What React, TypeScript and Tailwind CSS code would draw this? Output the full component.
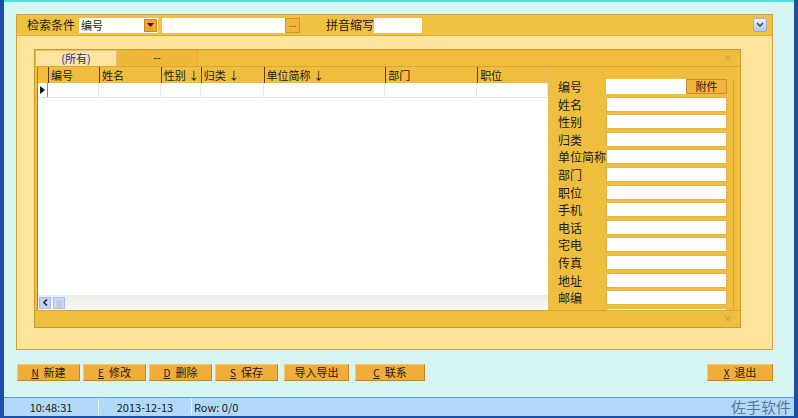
import React from "react";

const columns = [
  { title: "编号", w: "w-[51px]" },
  { title: "姓名", w: "w-[62px]" },
  { title: "性别 ↓", w: "w-[40px]" },
  { title: "归类 ↓", w: "w-[63px]" },
  { title: "单位简称 ↓", w: "w-[122px]" },
  { title: "部门", w: "w-[92px]" },
  { title: "职位", w: "w-[71px]" },
];

const fields = ["姓名", "性别", "归类", "单位简称", "部门", "职位", "手机", "电话", "宅电", "传真", "地址", "邮编", ""];

const buttons = [
  { key: "N", label: "新建", w: "w-[63px]" },
  { key: "E", label: "修改", w: "w-[63px]" },
  { key: "D", label: "删除", w: "w-[63px]" },
  { key: "S", label: "保存", w: "w-[63px]" },
  { key: "", label: "导入导出", w: "w-[65px]" },
  { key: "C", label: "联系", w: "w-[70px]" },
];

const font = { fontFamily: '"Noto Sans CJK SC", "Liberation Sans", sans-serif' };

const Btn = ({ k, label, w }: { k: string; label: string; w: string }) => (
  <div className={`${w} h-[17px] bg-[#f2ac3a] border border-[#c8861c] border-t-[#f8c870] border-l-[#f8c870] flex items-center justify-center text-[11px] text-[#202020]`}>
    {k && <span className="underline mr-[5px] text-[10px]">{k}</span>}
    {label}
  </div>
);

const App = () => {
  return (
    <div className="w-[798px] h-[418px] flex flex-col bg-[#1c4fa8] px-[4px] overflow-hidden text-[12px] text-[#1a1a1a]" style={font}>
      <div className="flex-1 bg-[#d6f5f3] border-t-[2px] border-[#4fe0e0] pt-[12px] pl-[12px] flex flex-col">
        {/* main panel */}
        <div className="w-[757px] h-[336px] border border-[#d2a232] bg-[#fbe49c] flex flex-col">
          <div className="h-[21px] bg-[#f1c142] border-b border-[#e0ae34] flex items-center pl-[10px] pr-[5px]">
            <span className="w-[52px]">检索条件</span>
            <div className="w-[79px] h-[15px] bg-white flex items-center">
              <span className="flex-1 pl-[2px] text-[11px]">编号</span>
              <div className="w-[13px] h-[13px] mr-[1px] bg-[#f0a830] border border-[#c88a20] flex items-center justify-center">
                <svg width="7" height="4" viewBox="0 0 7 4"><path d="M0 0h7L3.5 4z" fill="#202020" /></svg>
              </div>
            </div>
            <div className="w-[123px] h-[15px] bg-white ml-[4px]" />
            <div className="w-[15px] h-[15px] bg-[#f2b440] border border-[#d0962a] text-[9px] leading-[10px] text-center text-[#705010]">...</div>
            <span className="ml-[26px] w-[48px]">拼音缩写</span>
            <div className="w-[48px] h-[15px] bg-white" />
            <div className="flex-1" />
            <div className="w-[14px] h-[14px] rounded-[2px] bg-gradient-to-b from-[#e8eefc] to-[#b4c6ec] border border-[#9aaed8] flex items-center justify-center">
              <svg width="8" height="6" viewBox="0 0 8 6"><path d="M1 1l3 3 3-3" fill="none" stroke="#3a4e8a" strokeWidth="1.6" /></svg>
            </div>
          </div>
          <div className="pl-[17px] pt-[13px]">
            {/* inner panel */}
            <div className="w-[707px] h-[279px] border border-[#cc9a2e] bg-[#f0be3e] flex flex-col">
              <div className="h-[17px] flex items-end border-b border-[#d9a534]">
                <div className="ml-[1px] w-[81px] h-[16px] bg-[#fbe3a0] border-t border-r border-[#e6c070] text-center text-[11px] text-[#1c2ea0] leading-[15px]">(所有)</div>
                <div className="w-[81px] h-[16px] bg-[#f0b838] border-r border-[#e2aa36] text-center text-[11px] leading-[14px]">--</div>
                <div className="flex-1" />
                <span className="mr-[8px] mb-[3px] text-[9px] text-[#b89060] leading-[10px]">×</span>
              </div>
              <div className="flex-1 flex pl-[2px] overflow-hidden">
                {/* grid */}
                <div className="w-[511px] bg-white flex flex-col border-l border-[#b08024]">
                  <div className="h-[16px] bg-[#f0be3e] flex">
                    <div className="w-[10px]" />
                    {columns.map((c) => (
                      <div key={c.title} className={`${c.w} border-l border-[#5a4010] pl-[2px] text-[11px] leading-[16px] whitespace-nowrap overflow-hidden`}>
                        {c.title}
                      </div>
                    ))}
                  </div>
                  <div className="h-[15px] flex border-b border-[#e4e4e4]">
                    <div className="w-[10px] flex items-center pl-[2px] border-r border-[#888]">
                      <svg width="5" height="8" viewBox="0 0 5 8"><path d="M0 0l5 4-5 4z" fill="#101010" /></svg>
                    </div>
                    {columns.map((c) => (
                      <div key={c.title} className={`${c.w} border-r border-[#e6e6e6]`} />
                    ))}
                  </div>
                  <div className="flex-1" />
                  <div className="h-[15px] bg-gradient-to-b from-[#ecece8] to-[#f8f8f4] flex items-center pl-[1px] gap-[2px]">
                    <div className="w-[12px] h-[12px] bg-[#c4d4f4] border border-[#a8bce4] flex items-center justify-center">
                      <svg width="5" height="7" viewBox="0 0 5 7"><path d="M4 0.5L1 3.5l3 3" fill="none" stroke="#1e2c60" strokeWidth="1.6" /></svg>
                    </div>
                    <div className="w-[12px] h-[12px] bg-[#ccdaf4] border border-[#aabee6] text-[7px] leading-[10px] text-center text-[#8ea4d0]">|||</div>
                  </div>
                </div>
                {/* form */}
                <div className="flex-1 border-l border-[#e8c060] pl-[9px] pr-[6px] pt-[12px] overflow-hidden">
                  <div className="border-r border-[#d8a430] pr-[6px] h-full">
                    <div className="h-[17.6px] flex items-start">
                      <span className="w-[48px] leading-[16px]">编号</span>
                      <div className="w-[80px] h-[15px] bg-white" />
                      <div className="w-[41px] h-[15px] bg-[#f2b43e] border border-[#c8902a] text-[11px] leading-[13px] text-center">附件</div>
                    </div>
                    {fields.map((f, i) => (
                      <div key={i} className="h-[17.6px] flex items-start">
                        <span className="w-[48px] leading-[16px] whitespace-nowrap">{f}</span>
                        <div className="w-[121px] h-[15px] bg-white border border-[#e0b44c]" />
                      </div>
                    ))}
                  </div>
                </div>
              </div>
              <div className="h-[17px] border-t border-[#d8a432] flex items-center justify-end pr-[8px]">
                <span className="text-[9px] text-[#b89060] leading-[10px]">×</span>
              </div>
            </div>
          </div>
        </div>
        {/* buttons */}
        <div className="w-[757px] mt-[14px] flex items-center">
          <div className="ml-[1px] flex gap-[2px]">
            {buttons.slice(0, 4).map((b) => (
              <div key={b.label} className="mr-[1px]">
                <Btn k={b.key} label={b.label} w={b.w} />
              </div>
            ))}
          </div>
          <div className="ml-[5px]">
            <Btn k="" label="导入导出" w="w-[65px]" />
          </div>
          <div className="ml-[6px]">
            <Btn k="C" label="联系" w="w-[70px]" />
          </div>
          <div className="flex-1" />
          <Btn k="X" label="退出" w="w-[66px]" />
        </div>
        <div className="flex-1" />
      </div>
      {/* status bar */}
      <div className="h-[21px] bg-[#b2daf8] border-t border-[#5a9ad8] border-b-[2px] border-b-[#1c4fa8] flex items-center text-[11px] text-[#1a1a1a]">
        <div className="w-[95px] text-center border-r border-[#e8f4ff]">10:48:31</div>
        <div className="w-[93px] text-center border-r border-[#e8f4ff]">2013-12-13</div>
        <div className="pl-[2px]">Row: 0/0</div>
        <div className="flex-1" />
        <div className="text-[15px] text-[#5c7894] pr-[3px]">佐手软件</div>
      </div>
    </div>
  );
};

export default App;
